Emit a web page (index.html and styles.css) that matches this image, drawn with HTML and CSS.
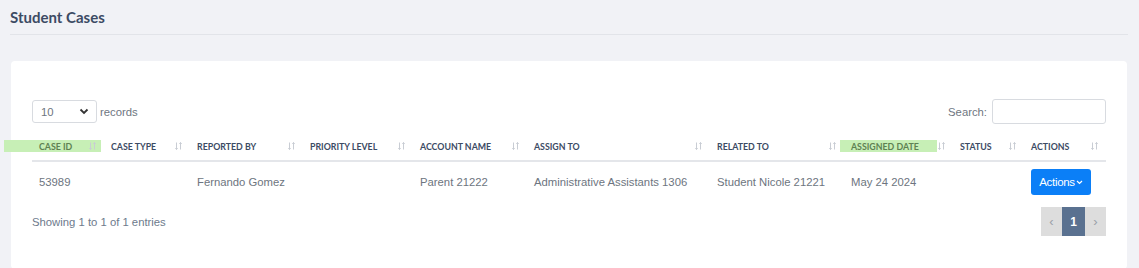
FILE: index.html
```html
<!DOCTYPE html>
<html>
<head>
<meta charset="utf-8">
<link rel="stylesheet" href="styles.css">
</head>
<body>
<header class="page-head"><h1>Student Cases</h1></header>
<main class="card">
  <div class="controls">
    <div class="len">
      <div class="select"><span>10</span><svg width="10" height="7" viewBox="0 0 10 7"><path d="M1.5 1.5 L5 5 L8.5 1.5" fill="none" stroke="#333" stroke-width="1.8"/></svg></div>
      <span class="lbl">records</span>
    </div>
    <div class="search"><span class="lbl">Search:</span><div class="input"></div></div>
  </div>
  <table class="grid">
    <colgroup>
      <col style="width:72px"><col style="width:86px"><col style="width:113px"><col style="width:110px"><col style="width:114px"><col style="width:183px"><col style="width:134px"><col style="width:109px"><col style="width:71px"><col style="width:82px">
    </colgroup>
    <thead>
      <tr>
        <th class="hl hl-first"><div class="th"><span>Case ID</span><i class="sort"></i></div></th>
        <th><div class="th"><span>Case Type</span><i class="sort"></i></div></th>
        <th><div class="th"><span>Reported By</span><i class="sort"></i></div></th>
        <th><div class="th"><span>Priority Level</span><i class="sort"></i></div></th>
        <th><div class="th"><span>Account Name</span><i class="sort"></i></div></th>
        <th><div class="th"><span>Assign To</span><i class="sort"></i></div></th>
        <th><div class="th"><span>Related To</span><i class="sort"></i></div></th>
        <th class="hl hl-date"><div class="th"><span>Assigned Date</span><i class="sort"></i></div></th>
        <th><div class="th"><span>Status</span><i class="sort"></i></div></th>
        <th><div class="th"><span>Actions</span><i class="sort"></i></div></th>
      </tr>
    </thead>
    <tbody>
      <tr>
        <td>53989</td>
        <td></td>
        <td>Fernando Gomez</td>
        <td></td>
        <td>Parent 21222</td>
        <td>Administrative Assistants 1306</td>
        <td>Student Nicole 21221</td>
        <td>May 24 2024</td>
        <td></td>
        <td><button class="btn">Actions<svg width="7" height="5" viewBox="0 0 7 5"><path d="M1 1 L3.5 3.5 L6 1" fill="none" stroke="#fff" stroke-width="1.2"/></svg></button></td>
      </tr>
    </tbody>
  </table>
  <div class="foot">
    <span class="info">Showing 1 to 1 of 1 entries</span>
    <nav class="pager"><span class="pg dis">&#8249;</span><span class="pg cur">1</span><span class="pg dis">&#8250;</span></nav>
  </div>
</main>
</body>
</html>
```
FILE: styles.css
```css
html, body { margin: 0; padding: 0; }
body {
  background: #f1f2f6;
  font-family: "Liberation Sans", Arial, sans-serif;
  width: 1139px;
  height: 268px;
  overflow: hidden;
}
.page-head {
  margin: 0 11px 0 10px;
  padding: 8px 0 7px;
  border-bottom: 1px solid #e2e4e9;
}
.page-head h1 {
  margin: 0;
  font-family: Lato, sans-serif;
  font-weight: 700;
  font-size: 15px;
  line-height: 19px;
  color: #3c4b64;
}
.card {
  display: block;
  margin: 26px 12px 0 11px;
  background: #fff;
  border-radius: 4px;
  padding: 38px 21px 20px;
  min-height: 150px;
}
.controls {
  display: flex;
  justify-content: space-between;
  align-items: center;
  height: 25px;
}
.len, .search { display: flex; align-items: center; }
.select {
  box-sizing: border-box;
  width: 65px;
  height: 23px;
  border: 1px solid #d8dbe0;
  border-radius: 3px;
  display: flex;
  align-items: center;
  justify-content: space-between;
  padding: 0 7px 0 8px;
  font-size: 11.3px;
  color: #6d7580;
}
.lbl { font-size: 11.3px; color: #6e7681; }
.len .lbl { margin-left: 3px; }
.search .lbl { margin-right: 5px; }
.input {
  box-sizing: border-box;
  width: 114px;
  height: 25px;
  border: 1px solid #d8dbe0;
  border-radius: 3px;
}
.grid {
  margin-top: 8px;
  width: 1074px;
  table-layout: fixed;
  border-collapse: collapse;
}
.grid th {
  padding: 7px;
  border-bottom: 2px solid #e4e6ea;
  text-align: left;
  position: relative;
}
.th {
  display: flex;
  align-items: center;
  height: 14px;
  font-family: Lato, sans-serif;
  font-weight: 700;
  font-size: 8.8px;
  text-transform: uppercase;
  color: #3c4b64;
  white-space: nowrap;
  position: relative;
  z-index: 1;
}
.sort {
  margin-left: auto;
  margin-right: 1px;
  width: 7px;
  height: 8px;
  background: url("data:image/svg+xml,%3Csvg xmlns='http://www.w3.org/2000/svg' width='7' height='8' viewBox='0 0 7 8'%3E%3Cpath d='M1.5 0.5V7.5M0.3 6.2L1.5 7.5L2.7 6.2M5.5 7.5V0.5M4.3 1.8L5.5 0.5L6.7 1.8' fill='none' stroke='%23c9cdd4' stroke-width='1'/%3E%3C/svg%3E") no-repeat;
}
.hl::before {
  content: "";
  position: absolute;
  top: 8px;
  height: 12px;
  background: #c7efb6;
  z-index: 0;
}
.hl-first::before { left: -28px; width: 97px; }
.hl-date::before { left: -4px; width: 97px; }
.hl .th span { color: #5e8152; }
.grid td {
  padding: 7px;
  height: 26px;
  font-size: 11.3px;
  color: #6d7580;
  white-space: nowrap;
}
.btn {
  height: 26px;
  width: 60px;
  border: 0;
  border-radius: 3px;
  background: #0b7ff7;
  color: #fff;
  font-family: "Liberation Sans", Arial, sans-serif;
  font-size: 11.5px;
  padding: 0;
  display: flex;
  align-items: center;
  justify-content: center;
  letter-spacing: -0.3px;
}
.btn svg { margin-left: 1px; }
.foot {
  display: flex;
  justify-content: space-between;
  align-items: center;
  margin-top: 5px;
}
.info { font-size: 11.3px; color: #6d7a8c; }
.pager { display: flex; }
.pg {
  height: 29px;
  display: flex;
  align-items: center;
  justify-content: center;
  font-size: 13px;
}
.dis { width: 21px; background: #dddddd; color: #9aa0a8; }
.cur { width: 23px; background: #5a7190; color: #fff; font-weight: 700; font-size: 12px; }
```
